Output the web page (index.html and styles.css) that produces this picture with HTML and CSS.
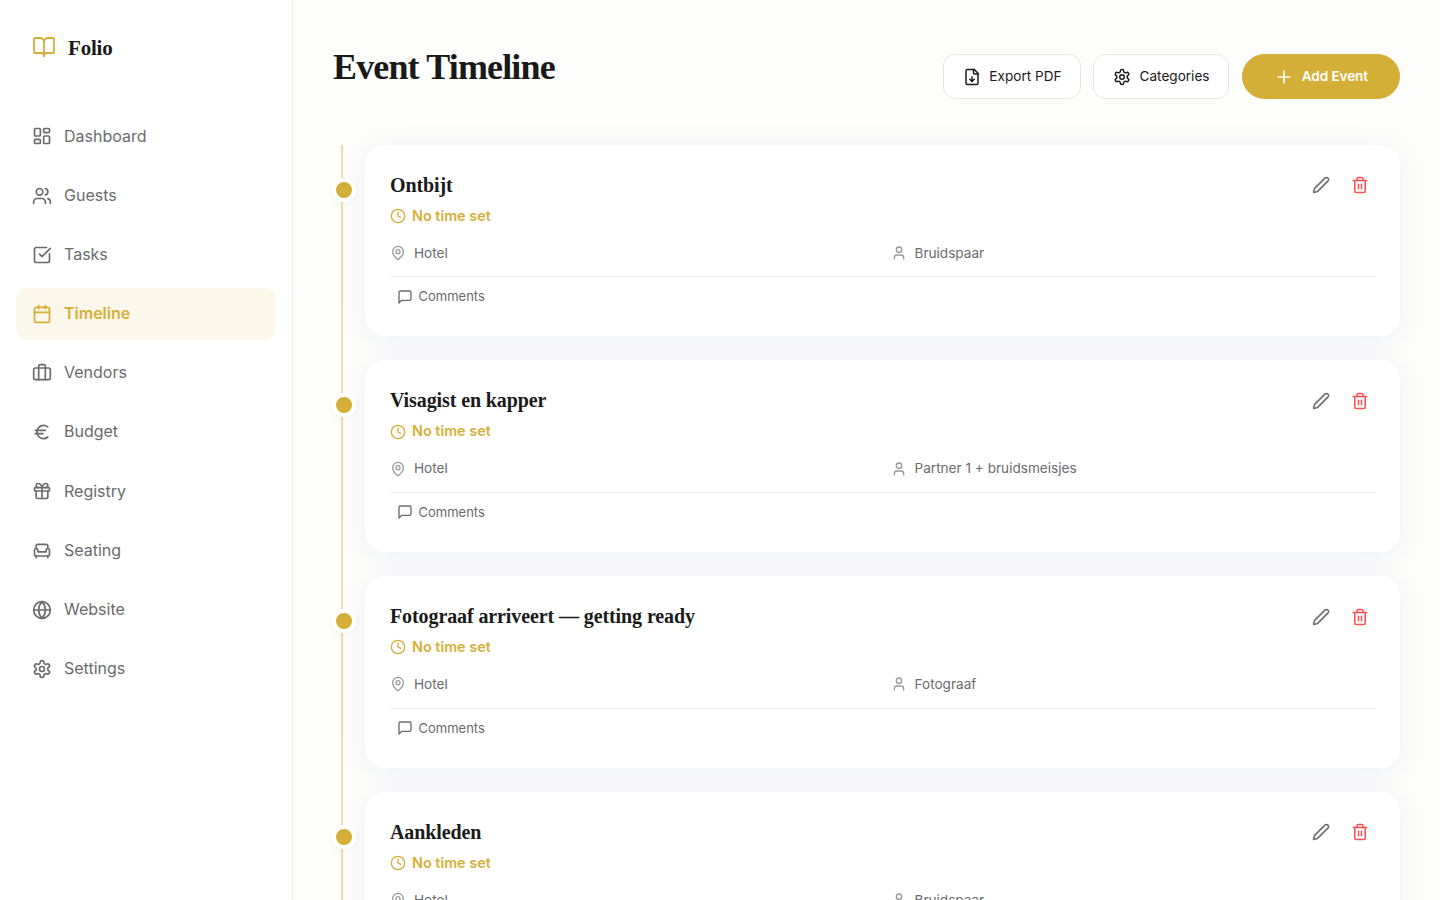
FILE: index.html
```html
<!DOCTYPE html>
<html lang="en">
<head>
<meta charset="utf-8">
<title>Event Timeline</title>
<link rel="stylesheet" href="styles.css">
</head>
<body>
<svg class="sprite" xmlns="http://www.w3.org/2000/svg">
  <symbol id="i-book" viewBox="0 0 24 24"><path d="M12 7v14"/><path d="M3 18a1 1 0 0 1-1-1V4a1 1 0 0 1 1-1h5a4 4 0 0 1 4 4 4 4 0 0 1 4-4h5a1 1 0 0 1 1 1v13a1 1 0 0 1-1 1h-6a3 3 0 0 0-3 3 3 3 0 0 0-3-3z"/></symbol>
  <symbol id="i-dash" viewBox="0 0 24 24"><rect x="3" y="3" width="7" height="9" rx="1"/><rect x="14" y="3" width="7" height="5" rx="1"/><rect x="14" y="12" width="7" height="9" rx="1"/><rect x="3" y="16" width="7" height="5" rx="1"/></symbol>
  <symbol id="i-users" viewBox="0 0 24 24"><path d="M16 21v-2a4 4 0 0 0-4-4H6a4 4 0 0 0-4 4v2"/><circle cx="9" cy="7" r="4"/><path d="M22 21v-2a4 4 0 0 0-3-3.87"/><path d="M16 3.13a4 4 0 0 1 0 7.75"/></symbol>
  <symbol id="i-check" viewBox="0 0 24 24"><path d="M21 10.5V19a2 2 0 0 1-2 2H5a2 2 0 0 1-2-2V5a2 2 0 0 1 2-2h12.5"/><path d="m9 11 3 3L22 4"/></symbol>
  <symbol id="i-cal" viewBox="0 0 24 24"><path d="M8 2v4"/><path d="M16 2v4"/><rect x="3" y="4" width="18" height="18" rx="2"/><path d="M3 10h18"/></symbol>
  <symbol id="i-case" viewBox="0 0 24 24"><path d="M16 20V4a2 2 0 0 0-2-2h-4a2 2 0 0 0-2 2v16"/><rect x="2" y="6" width="20" height="14" rx="2"/></symbol>
  <symbol id="i-euro" viewBox="0 0 24 24"><path d="M4 10h12"/><path d="M4 14h9"/><path d="M19 6a7.7 7.7 0 0 0-5.2-2A7.9 7.9 0 0 0 6 12c0 4.4 3.5 8 7.8 8 2 0 3.8-.8 5.2-2"/></symbol>
  <symbol id="i-gift" viewBox="0 0 24 24"><rect x="3" y="8" width="18" height="4" rx="1"/><path d="M12 8v13"/><path d="M19 12v7a2 2 0 0 1-2 2H7a2 2 0 0 1-2-2v-7"/><path d="M7.5 8a2.5 2.5 0 0 1 0-5A4.8 8 0 0 1 12 8a4.8 8 0 0 1 4.5-5 2.5 2.5 0 0 1 0 5"/></symbol>
  <symbol id="i-chair" viewBox="0 0 24 24"><path d="M19 9V6a2 2 0 0 0-2-2H7a2 2 0 0 0-2 2v3"/><path d="M3 16a2 2 0 0 0 2 2h14a2 2 0 0 0 2-2v-5a2 2 0 0 0-4 0v1.5a.5.5 0 0 1-.5.5h-9a.5.5 0 0 1-.5-.5V11a2 2 0 0 0-4 0z"/><path d="M5 18v2"/><path d="M19 18v2"/></symbol>
  <symbol id="i-globe" viewBox="0 0 24 24"><circle cx="12" cy="12" r="10"/><path d="M12 2a14.5 14.5 0 0 0 0 20 14.5 14.5 0 0 0 0-20"/><path d="M2 12h20"/></symbol>
  <symbol id="i-gear" viewBox="0 0 24 24"><path d="M12.22 2h-.44a2 2 0 0 0-2 2v.18a2 2 0 0 1-1 1.73l-.43.25a2 2 0 0 1-2 0l-.15-.08a2 2 0 0 0-2.73.73l-.22.38a2 2 0 0 0 .73 2.73l.15.1a2 2 0 0 1 1 1.72v.51a2 2 0 0 1-1 1.74l-.15.09a2 2 0 0 0-.73 2.73l.22.38a2 2 0 0 0 2.73.73l.15-.08a2 2 0 0 1 2 0l.43.25a2 2 0 0 1 1 1.73V20a2 2 0 0 0 2 2h.44a2 2 0 0 0 2-2v-.18a2 2 0 0 1 1-1.73l.43-.25a2 2 0 0 1 2 0l.15.08a2 2 0 0 0 2.73-.73l.22-.39a2 2 0 0 0-.73-2.73l-.15-.08a2 2 0 0 1-1-1.74v-.5a2 2 0 0 1 1-1.74l.15-.09a2 2 0 0 0 .73-2.73l-.22-.38a2 2 0 0 0-2.73-.73l-.15.08a2 2 0 0 1-2 0l-.43-.25a2 2 0 0 1-1-1.73V4a2 2 0 0 0-2-2z"/><circle cx="12" cy="12" r="3"/></symbol>
  <symbol id="i-file" viewBox="0 0 24 24"><path d="M15 2H6a2 2 0 0 0-2 2v16a2 2 0 0 0 2 2h12a2 2 0 0 0 2-2V7Z"/><path d="M14 2v4a2 2 0 0 0 2 2h4"/><path d="M12 18v-6"/><path d="m9 15 3 3 3-3"/></symbol>
  <symbol id="i-plus" viewBox="0 0 24 24"><path d="M5 12h14"/><path d="M12 5v14"/></symbol>
  <symbol id="i-pen" viewBox="0 0 24 24"><path d="M21.174 6.812a1 1 0 0 0-3.986-3.987L3.842 16.174a2 2 0 0 0-.5.83l-1.321 4.352a.5.5 0 0 0 .623.622l4.353-1.32a2 2 0 0 0 .83-.497z"/></symbol>
  <symbol id="i-trash" viewBox="0 0 24 24"><path d="M3 6h18"/><path d="M19 6v14c0 1-1 2-2 2H7c-1 0-2-1-2-2V6"/><path d="M8 6V4c0-1 1-2 2-2h4c1 0 2 1 2 2v2"/><path d="M10 11v6"/><path d="M14 11v6"/></symbol>
  <symbol id="i-clock" viewBox="0 0 24 24"><circle cx="12" cy="12" r="10"/><path d="M12 6v6l4 2"/></symbol>
  <symbol id="i-pin" viewBox="0 0 24 24"><path d="M20 10c0 4.993-5.539 10.193-7.399 11.799a1 1 0 0 1-1.202 0C9.539 20.193 4 14.993 4 10a8 8 0 0 1 16 0"/><circle cx="12" cy="10" r="3"/></symbol>
  <symbol id="i-user" viewBox="0 0 24 24"><path d="M19 21v-2a4 4 0 0 0-4-4H9a4 4 0 0 0-4 4v2"/><circle cx="12" cy="7" r="4"/></symbol>
  <symbol id="i-msg" viewBox="0 0 24 24"><path d="M21 15a2 2 0 0 1-2 2H7l-4 4V5a2 2 0 0 1 2-2h14a2 2 0 0 1 2 2z"/></symbol>
</svg>
<div class="app">
  <aside class="sidebar">
    <div class="brand">
      <svg class="icon brand-icon"><use href="#i-book"/></svg>
      <span class="brand-name">Folio</span>
    </div>
    <nav class="nav">
      <a class="nav-item"><svg class="icon nav-icon"><use href="#i-dash"/></svg>Dashboard</a>
      <a class="nav-item"><svg class="icon nav-icon"><use href="#i-users"/></svg>Guests</a>
      <a class="nav-item"><svg class="icon nav-icon"><use href="#i-check"/></svg>Tasks</a>
      <a class="nav-item active"><svg class="icon nav-icon"><use href="#i-cal"/></svg>Timeline</a>
      <a class="nav-item"><svg class="icon nav-icon"><use href="#i-case"/></svg>Vendors</a>
      <a class="nav-item"><svg class="icon nav-icon"><use href="#i-euro"/></svg>Budget</a>
      <a class="nav-item"><svg class="icon nav-icon"><use href="#i-gift"/></svg>Registry</a>
      <a class="nav-item"><svg class="icon nav-icon"><use href="#i-chair"/></svg>Seating</a>
      <a class="nav-item"><svg class="icon nav-icon"><use href="#i-globe"/></svg>Website</a>
      <a class="nav-item"><svg class="icon nav-icon"><use href="#i-gear"/></svg>Settings</a>
    </nav>
  </aside>
  <main class="main">
    <header class="page-head">
      <h1 class="page-title">Event Timeline</h1>
      <div class="actions">
        <button class="btn"><svg class="icon btn-icon"><use href="#i-file"/></svg>Export PDF</button>
        <button class="btn"><svg class="icon btn-icon"><use href="#i-gear"/></svg>Categories</button>
        <button class="btn btn-primary"><svg class="icon plus-icon"><use href="#i-plus"/></svg>Add Event</button>
      </div>
    </header>
    <section class="timeline">
      <article class="event">
        <span class="dot"></span>
        <div class="card">
          <div class="card-top">
            <div>
              <h2 class="event-title">Ontbijt</h2>
              <div class="event-time"><svg class="icon small"><use href="#i-clock"/></svg>No time set</div>
            </div>
            <div class="card-tools">
              <button class="tool"><svg class="icon pen"><use href="#i-pen"/></svg></button>
              <button class="tool danger"><svg class="icon trash"><use href="#i-trash"/></svg></button>
            </div>
          </div>
          <div class="meta">
            <div class="meta-item"><svg class="icon small muted"><use href="#i-pin"/></svg>Hotel</div>
            <div class="meta-item"><svg class="icon small muted"><use href="#i-user"/></svg>Bruidspaar</div>
          </div>
          <div class="card-foot"><button class="comments"><svg class="icon small"><use href="#i-msg"/></svg>Comments</button></div>
        </div>
      </article>
      <article class="event">
        <span class="dot"></span>
        <div class="card">
          <div class="card-top">
            <div>
              <h2 class="event-title">Visagist en kapper</h2>
              <div class="event-time"><svg class="icon small"><use href="#i-clock"/></svg>No time set</div>
            </div>
            <div class="card-tools">
              <button class="tool"><svg class="icon pen"><use href="#i-pen"/></svg></button>
              <button class="tool danger"><svg class="icon trash"><use href="#i-trash"/></svg></button>
            </div>
          </div>
          <div class="meta">
            <div class="meta-item"><svg class="icon small muted"><use href="#i-pin"/></svg>Hotel</div>
            <div class="meta-item"><svg class="icon small muted"><use href="#i-user"/></svg>Partner 1 + bruidsmeisjes</div>
          </div>
          <div class="card-foot"><button class="comments"><svg class="icon small"><use href="#i-msg"/></svg>Comments</button></div>
        </div>
      </article>
      <article class="event">
        <span class="dot"></span>
        <div class="card">
          <div class="card-top">
            <div>
              <h2 class="event-title">Fotograaf arriveert — getting ready</h2>
              <div class="event-time"><svg class="icon small"><use href="#i-clock"/></svg>No time set</div>
            </div>
            <div class="card-tools">
              <button class="tool"><svg class="icon pen"><use href="#i-pen"/></svg></button>
              <button class="tool danger"><svg class="icon trash"><use href="#i-trash"/></svg></button>
            </div>
          </div>
          <div class="meta">
            <div class="meta-item"><svg class="icon small muted"><use href="#i-pin"/></svg>Hotel</div>
            <div class="meta-item"><svg class="icon small muted"><use href="#i-user"/></svg>Fotograaf</div>
          </div>
          <div class="card-foot"><button class="comments"><svg class="icon small"><use href="#i-msg"/></svg>Comments</button></div>
        </div>
      </article>
      <article class="event">
        <span class="dot"></span>
        <div class="card">
          <div class="card-top">
            <div>
              <h2 class="event-title">Aankleden</h2>
              <div class="event-time"><svg class="icon small"><use href="#i-clock"/></svg>No time set</div>
            </div>
            <div class="card-tools">
              <button class="tool"><svg class="icon pen"><use href="#i-pen"/></svg></button>
              <button class="tool danger"><svg class="icon trash"><use href="#i-trash"/></svg></button>
            </div>
          </div>
          <div class="meta">
            <div class="meta-item"><svg class="icon small muted"><use href="#i-pin"/></svg>Hotel</div>
            <div class="meta-item"><svg class="icon small muted"><use href="#i-user"/></svg>Bruidspaar</div>
          </div>
          <div class="card-foot"><button class="comments"><svg class="icon small"><use href="#i-msg"/></svg>Comments</button></div>
        </div>
      </article>
    </section>
  </main>
</div>
</body>
</html>
```

FILE: styles.css
```css
* { box-sizing: border-box; }
html, body { height: 100%; }
body {
  margin: 0;
  overflow: hidden;
  font-family: "Inter", "Liberation Sans", sans-serif;
  font-size: 16px;
  line-height: 1.6;
  color: #1a1a1a;
  background: #fdfdfb;
}
.sprite { display: none; }
.icon {
  display: block;
  flex: none;
  fill: none;
  stroke: currentColor;
  stroke-width: 2;
  stroke-linecap: round;
  stroke-linejoin: round;
}
.app { display: flex; height: 900px; overflow: hidden; }

.sidebar {
  flex: none;
  width: 293px;
  height: 100%;
  background: #fff;
  border-right: 1px solid #f0f0f0;
  padding: 32px 16px;
}
.brand {
  display: flex;
  align-items: center;
  gap: 12px;
  height: 32px;
  padding-left: 16px;
  margin-bottom: 46.76px;
}
.brand-icon { width: 24px; height: 24px; color: #d4af37; stroke-width: 1.8; margin-top: -2px; }
.brand-name {
  font-family: "Liberation Serif", serif;
  font-weight: 700;
  font-size: 21px;
  letter-spacing: -0.2px;
  position: relative;
  top: 1px;
}
.nav { display: flex; flex-direction: column; gap: 8px; }
.nav-item {
  display: flex;
  align-items: center;
  gap: 12px;
  padding: 12.8px 16px;
  border-radius: 12px;
  color: #6b6b6b;
}
.nav-icon { width: 20px; height: 20px; }
.nav-item.active { background: #fbf7ea; color: #d4af37; font-weight: 600; }

.main { flex: 1; min-width: 0; padding: 40px 40px 0; height: 900px; overflow: hidden; }
.page-head {
  display: flex;
  justify-content: space-between;
  align-items: flex-end;
  margin-bottom: 45.8px;
}
.page-title {
  margin: 0 0 5px;
  font-family: "Liberation Serif", serif;
  font-weight: 700;
  font-size: 36px;
  line-height: 54px;
  letter-spacing: -0.85px;
}
.actions { display: flex; gap: 12px; }
.btn {
  display: flex;
  align-items: center;
  gap: 8.5px;
  padding: 10.2px 18.5px 10.2px 19px;
  border: 1px solid #e5e5e5;
  border-radius: 12px;
  background: #fff;
  color: #1a1a1a;
  font: 400 13.6px/22.4px "Inter", "Liberation Sans", sans-serif;
}
.btn-icon { width: 18px; height: 18px; }
.btn-primary {
  gap: 8px;
  margin-left: 0.7px;
  padding: 10.2px 31px;
  border-color: #d4af37;
  border-radius: 24px;
  background: #d4af37;
  color: #fff;
  font-weight: 600;
  letter-spacing: -0.1px;
}
.plus-icon { width: 20px; height: 20px; }

.timeline {
  position: relative;
  display: flex;
  flex-direction: column;
  gap: 24px;
  padding-left: 32px;
}
.timeline::before {
  content: "";
  position: absolute;
  left: 8px;
  top: 0;
  bottom: 0;
  width: 2px;
  background: #f1deae;
}
.event { position: relative; }
.dot {
  position: absolute;
  left: -33px;
  top: 33px;
  width: 24px;
  height: 24px;
  border: 4px solid #fff;
  border-radius: 50%;
  background: #d4af37;
  box-shadow: 0 2px 6px rgba(0, 0, 0, 0.04);
}
.card {
  padding: 24px 24px 24px 25px;
  border-radius: 20px;
  background: #fff;
  box-shadow: 0 4px 30px rgba(30, 40, 160, 0.065);
}
.card-top { display: flex; justify-content: space-between; align-items: flex-start; }
.event-title {
  margin: 0;
  font-family: "Liberation Serif", serif;
  font-weight: 700;
  font-size: 20px;
  line-height: 32px;
  letter-spacing: -0.1px;
}
.event-time {
  display: flex;
  align-items: center;
  gap: 6px;
  margin-top: 4px;
  color: #d4af37;
  font-size: 14.4px;
  font-weight: 600;
  line-height: 22.4px;
}
.small { width: 16px; height: 16px; }
.muted { color: #999; }
.card-tools { display: flex; gap: 7px; padding-top: 0.6px; }
.tool {
  display: flex;
  align-items: center;
  justify-content: center;
  width: 32px;
  height: 32px;
  padding: 0;
  border: 0;
  background: none;
  color: #6b6b6b;
}
.pen { width: 18px; height: 18px; }
.trash { width: 18px; height: 18px; }
.danger { color: #ff4d4f; }
.meta {
  display: grid;
  grid-template-columns: 1fr 1fr;
  gap: 15px;
  margin-top: 14.6px;
  padding-bottom: 12.2px;
  border-bottom: 1px solid #eee;
}
.meta-item {
  display: flex;
  align-items: center;
  gap: 8px;
  color: #6b6b6b;
  font-size: 13.6px;
  line-height: 22.4px;
}
.card-foot { margin-top: 4px; }
.comments {
  display: flex;
  align-items: center;
  gap: 5.5px;
  padding: 5px 7px 5.2px;
  border: 0;
  background: none;
  color: #6b6b6b;
  font: 400 13px/20.8px "Inter", "Liberation Sans", sans-serif;
}
```
